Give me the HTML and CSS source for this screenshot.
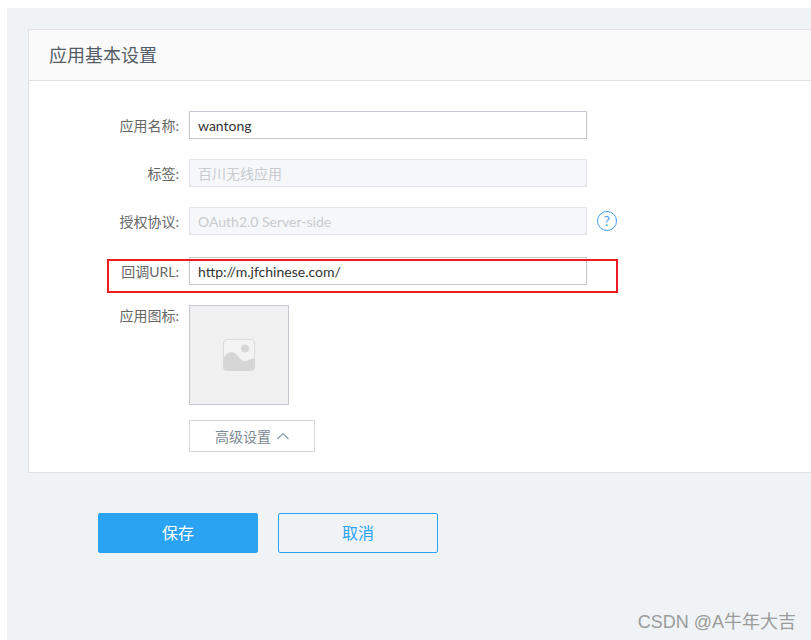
FILE: index.html
```html
<!DOCTYPE html>
<html lang="zh-CN">
<head>
    <meta charset="UTF-8">
    <title>应用基本设置</title>
    <link rel="stylesheet" href="styles.css">
</head>
<body>
    <div class="page">
        <div class="card">
            <div class="card-head">应用基本设置</div>
            <div class="card-body">
                <div class="row">
                    <label class="row-label">应用名称:</label>
                    <div class="field">wantong</div>
                </div>
                <div class="row">
                    <label class="row-label">标签:</label>
                    <div class="field disabled">百川无线应用</div>
                </div>
                <div class="row">
                    <label class="row-label">授权协议:</label>
                    <div class="field disabled">OAuth2.0 Server-side</div>
                    <span class="help">?</span>
                </div>
                <div class="row row-url">
                    <label class="row-label">回调URL:</label>
                    <div class="field">http://m.jfchinese.com/</div>
                    <div class="red-mark"></div>
                </div>
                <div class="row row-icon">
                    <label class="row-label">应用图标:</label>
                    <div class="icon-box">
                        <svg width="32" height="32" viewBox="0 0 32 32">
                            <rect x="0.5" y="0.5" width="31" height="31" rx="3.5" fill="#f3f3f3" stroke="#dcdcdc"/>
                            <path d="M0 20.5C3 13.5 8 12 12 14.5C15.5 16.5 17.5 21.5 21 22C25 22.5 26.5 19 32 19.5V28C32 30.2 30.2 32 28 32H4C1.8 32 0 30.2 0 28Z" fill="#d6d6d6"/>
                            <circle cx="22" cy="9.5" r="4" fill="#d6d6d6"/>
                        </svg>
                    </div>
                </div>
                <div class="row row-more">
                    <div class="more-btn">高级设置
                        <svg width="12" height="8" viewBox="0 0 12 8"><path d="M0.5 7L6 1.5L11.5 7" fill="none" stroke="#8c9aa8" stroke-width="1.2"/></svg>
                    </div>
                </div>
            </div>
        </div>
        <div class="actions">
            <div class="btn btn-save">保存</div>
            <div class="btn btn-cancel">取消</div>
        </div>
        <div class="watermark">CSDN @A牛年大吉</div>
    </div>
</body>
</html>
```

FILE: styles.css
```css
* {
    margin: 0;
    padding: 0;
    box-sizing: border-box;
}
html, body {
    height: 100%;
    overflow: hidden;
}
body {
    padding: 8px 0 0 7px;
    background-color: #fff;
    font-family: "Lato", "Noto Sans CJK SC", sans-serif;
    font-size: 14px;
    color: #333;
}
.page {
    position: relative;
    height: 632px;
    padding: 21px 0 0 21px;
    background-color: #eff3f6;
    overflow: hidden;
}
.card {
    width: 820px;
    height: 444px;
    background-color: #fff;
    border: 1px solid #e0e2e8;
}
.card-head {
    height: 51px;
    padding-left: 20px;
    line-height: 51px;
    font-size: 18px;
    color: #555d68;
    background-color: #fafafa;
    border-bottom: 1px solid #e0e2e8;
}
.card-body {
    padding-top: 30px;
}
.row {
    position: relative;
    display: flex;
    align-items: center;
    height: 28px;
    margin-bottom: 20px;
}
.row-label {
    width: 160px;
    padding-right: 10px;
    text-align: right;
    color: #666;
}
.field {
    width: 398px;
    height: 28px;
    padding-left: 8px;
    line-height: 27px;
    border: 1px solid #c5c6d0;
    color: #333;
}
.field.disabled {
    background-color: #f6f7f9;
    border-color: #e4e5ea;
    color: #c9cbcf;
}
.help {
    width: 20px;
    height: 20px;
    margin-left: 10px;
    line-height: 17px;
    text-align: center;
    font-size: 14px;
    color: #3f9ff0;
    border: 1.5px solid #3f9ff0;
    border-radius: 50%;
}
.row-url {
    margin-top: 22px;
}
.red-mark {
    position: absolute;
    left: 78px;
    top: 2px;
    width: 511px;
    height: 34px;
    border: 2px solid #ed1c24;
}
.row-icon {
    align-items: flex-start;
    height: 100px;
    margin-bottom: 15px;
}
.row-icon .row-label {
    line-height: 22px;
}
.icon-box {
    display: flex;
    align-items: center;
    justify-content: center;
    width: 100px;
    height: 100px;
    background-color: #f0f0f0;
    border: 1px solid #c5c6d0;
}
.row-more {
    height: 32px;
    margin: 0 0 0 160px;
}
.more-btn {
    display: flex;
    align-items: center;
    justify-content: center;
    gap: 6px;
    width: 126px;
    height: 32px;
    color: #7d8894;
    border: 1px solid #d3d8e2;
}
.actions {
    display: flex;
    gap: 20px;
    margin: 40px 0 0 70px;
}
.btn {
    width: 160px;
    height: 40px;
    line-height: 38px;
    text-align: center;
    font-size: 16px;
    border: 1px solid #2aa4f2;
    border-radius: 2px;
}
.btn-save {
    color: #fff;
    background-color: #2aa4f2;
}
.btn-cancel {
    color: #2aa4f2;
}
.watermark {
    position: absolute;
    right: 15px;
    bottom: 7px;
    font-family: "Liberation Sans", "Noto Sans CJK SC", sans-serif;
    font-size: 18px;
    color: #9b9b9b;
}
```
